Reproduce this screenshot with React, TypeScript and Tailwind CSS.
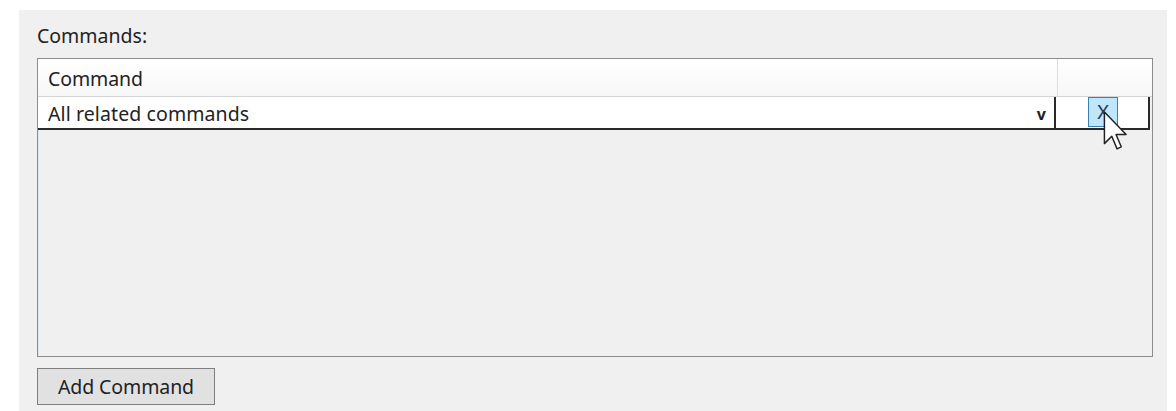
export default function App() {
  return (
    <div className="min-h-[411px] bg-white pl-[19px] pt-[10px] pr-[9px] font-['Noto_Sans',sans-serif] text-[#222]">
      <div className="h-[401px] bg-[#f0f0f0] pl-[18px] pr-[14px] pt-[14px]">
        <div className="text-[19.5px] leading-[24px] tracking-[0px]">Commands:</div>

        <div className="mt-[10px] h-[299px] w-[1116px] border border-[#8a8c8f] bg-[#f0f0f0] shadow-[inset_1px_1px_0_#dfe7f0]">
          {/* header */}
          <div className="flex h-[38px] border-b border-[#d5d5d5] bg-gradient-to-b from-white to-[#f7f7f7]">
            <div className="flex flex-1 items-center border-r border-[#dcdcdc] pl-[10px] pt-[2px] text-[19.5px] tracking-[-0.1px]">
              Command
            </div>
            <div className="w-[94px]" />
          </div>

          {/* row */}
          <div className="flex h-[33px] w-[1112px] border-b-2 border-r-2 border-[#2a2a2a] bg-white">
            <div className="flex flex-1 items-center border-r-2 border-[#2a2a2a] pl-[10px] pr-[8px] pt-[3px] text-[19.5px] tracking-[0.1px]">
              <span className="flex-1">All related commands</span>
              <span className="text-[16px] font-bold">v</span>
            </div>
            <div className="relative flex w-[92px] items-start justify-center pl-[2px]">
              <div className="flex h-[30px] w-[30px] items-center justify-center border border-[#3c7fb1] bg-[#bee6fd] text-[20px] text-[#2a3a4a]">
                X
              </div>
              <svg
                className="absolute left-[47px] top-[14px]"
                width="26"
                height="40"
                viewBox="0 0 12 19"
              >
                <path
                  d="M0.5 0.5 L0.5 15.5 L4 12 L6.5 18 L8.5 17 L6 11.2 L10.8 11.2 Z"
                  fill="white"
                  stroke="#222"
                  strokeWidth="0.7"
                  strokeLinejoin="round"
                />
              </svg>
            </div>
          </div>
        </div>

        <button className="mt-[11px] h-[37px] w-[178px] border border-[#7f7f7f] bg-[#e1e1e1] text-[19.5px] tracking-[-0.1px] text-[#222]">
          Add Command
        </button>
      </div>
    </div>
  )
}
